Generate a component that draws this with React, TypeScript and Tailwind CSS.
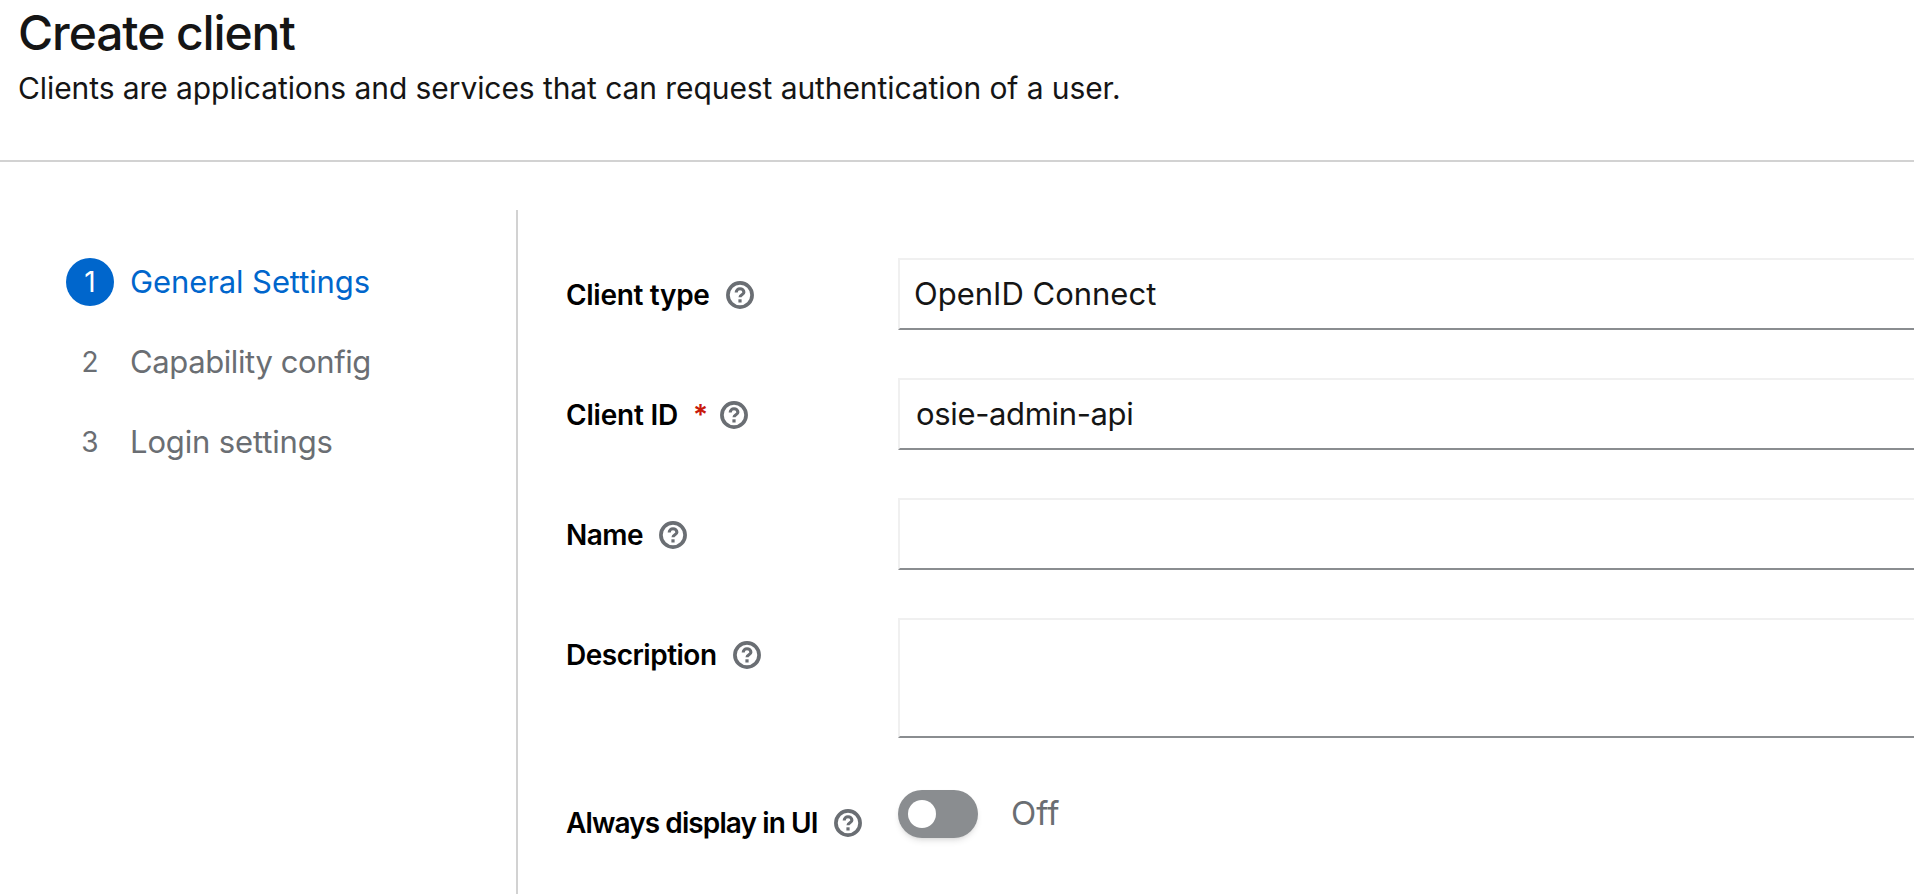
// patternfly style outlined help icon, the react-icons one clogs up when thickened
const Help = () => (
  <svg viewBox="0 0 28 28" className="w-[28px] h-[28px] shrink-0 text-[#6a6e73]" fill="none" stroke="currentColor">
    <circle cx="14" cy="14" r="12.1" strokeWidth="3.7" />
    <path d="M10.2 11.5c0-2.2 1.7-3.7 3.8-3.7s3.9 1.4 3.9 3.4c0 2.6-3.9 2.6-3.9 5.1" strokeWidth="3.1" />
    <rect x="12.4" y="18.3" width="3.2" height="3.2" fill="currentColor" stroke="none" />
  </svg>
);

const steps = [
  { n: "1", label: "General Settings", active: true, track: "tracking-[-0.1px]" },
  { n: "2", label: "Capability config", active: false, track: "tracking-[-0.4px]" },
  { n: "3", label: "Login settings", active: false, track: "tracking-[-0.15px]" },
];

type FieldProps = {
  label: string;
  required?: boolean;
  height?: string;
  value?: string;
  textPad?: string;
  labelTrack?: string;
  valueTrack?: string;
};

const Field = ({ label, required, height = "h-[72px]", value, textPad = "pl-[14px]", labelTrack = "tracking-[-0.5px]", valueTrack = "" }: FieldProps) => (
  <div className="flex">
    <div className="w-[332px] shrink-0 flex items-start pt-[19px] h-[60px]">
      <span className={`text-[28px] leading-[36px] font-semibold text-black ${labelTrack}`}>{label}</span>
      {required && <span className="ml-[15px] text-[28px] leading-[36px] font-semibold text-[#c9190b]">*</span>}
      <span className={`${required ? "ml-[12px]" : "ml-[16px]"} pt-1`}><Help /></span>
    </div>
    <div className={`flex-1 ${height} border-t-2 border-l-2 border-t-[#f0f0f0] border-l-[#f0f0f0] border-b-2 border-b-[#8a8d90] ${textPad} flex items-center`}>
      {value && <span className={`text-[31px] text-[#151515] ${valueTrack}`}>{value}</span>}
    </div>
  </div>
);

export default function App() {
  return (
    <div className="h-[894px] overflow-hidden bg-white font-['Inter',sans-serif]">
      <header className="h-[162px] border-b-2 border-[#d2d2d2] pl-[18px] pt-[4px]">
        <h1 className="text-[48px] leading-[58px] font-medium text-[#151515] tracking-[-1.1px]">Create client</h1>
        <p className="text-[30px] leading-[44px] text-[#151515] mt-[4px] tracking-[-0.08px]">Clients are applications and services that can request authentication of a user.</p>
      </header>
      <main className="flex pt-[48px]">
        <nav className="w-[518px] h-[684px] shrink-0 border-r-2 border-[#d2d2d2] pt-[48px] pl-[66px]">
          <ol className="flex flex-col gap-[32px]">
            {steps.map((s) => (
              <li key={s.n} className="flex items-center h-[48px]">
                <span className={`w-[48px] h-[48px] rounded-full flex items-center justify-center text-[28px] ${s.active ? "bg-[#06c] text-white" : "text-[#6a6e73]"}`}>{s.n}</span>
                <span className={`ml-[16px] mt-[1px] text-[31px] ${s.track} ${s.active ? "text-[#06c]" : "text-[#6a6e73]"}`}>{s.label}</span>
              </li>
            ))}
          </ol>
        </nav>
        <form className="flex-1 pl-[48px] pt-[48px] flex flex-col gap-[48px]">
          <Field label="Client type" value="OpenID Connect" labelTrack="tracking-[-0.3px]" />
          <Field label="Client ID" required value="osie-admin-api" textPad="pl-[16px]" labelTrack="tracking-[-0.2px]" valueTrack="tracking-[-0.35px]" />
          <Field label="Name" />
          <Field label="Description" height="h-[120px]" />
          <div className="flex mt-[4px]">
            <div className="w-[332px] shrink-0 flex items-start pt-[15px]">
              <span className="text-[28px] leading-[36px] font-semibold text-black tracking-[-0.9px]">Always display in UI</span>
              <span className="ml-[16px] pt-1"><Help /></span>
            </div>
            <div className="flex items-start">
              <span className="w-[80px] h-[48px] rounded-full bg-[#8a8d90] shadow-md flex items-center pl-[10px]">
                <span className="w-[28px] h-[28px] rounded-full bg-white" />
              </span>
              <span className="ml-[33px] mt-[3px] text-[33px] leading-[40px] text-[#6a6e73]">Off</span>
            </div>
          </div>
        </form>
      </main>
    </div>
  );
}
